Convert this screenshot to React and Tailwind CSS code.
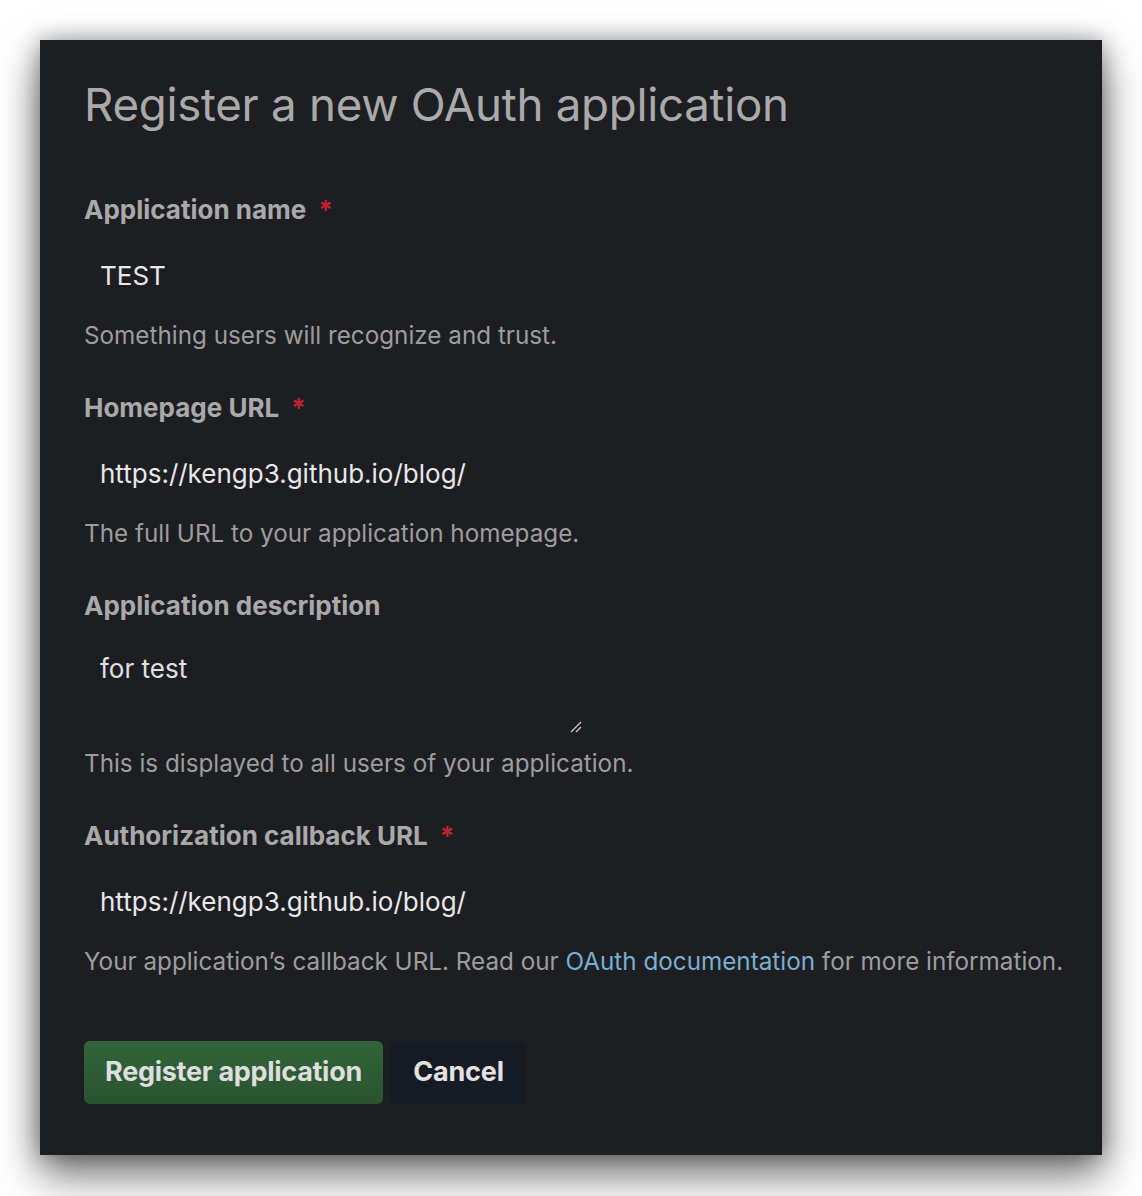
function Field({ label, required, children, hint, className = '' }) {
  return (
    <div className={className}>
      <div className="h-[34px] flex items-center text-[26px] font-bold text-[#a9a9a9]">
        {label}
        {required && <span className="ml-3 text-[#c5222f]">*</span>}
      </div>
      {children}
      <p className="h-[30px] flex items-center whitespace-nowrap text-[24.25px] text-[#9d9d9d]">{hint}</p>
    </div>
  )
}

function Input({ value }) {
  return (
    <div className="mt-[23px] mb-[20px] h-[52px] w-[500px] flex items-center px-4 text-[26px] text-[#e8e8e8]">
      {value}
    </div>
  )
}

export default function App() {
  return (
    <div className="bg-white p-10 pb-[41px] font-['Inter',sans-serif]">
      <div className="bg-[#1d1e22] px-[44px] pt-[77px] pb-[51px] shadow-[0_20px_40px_rgba(0,0,0,0.55),0_0_22px_rgba(0,0,0,0.35)]">
        <h1 className="-mt-10 h-[56px] flex items-center text-[45.7px] leading-none text-[#aaaaaa] tracking-[-0.3px]">
          Register a new OAuth application
        </h1>

        <Field className="mt-[59px]" label="Application name" required hint="Something users will recognize and trust.">
          <Input value="TEST" />
        </Field>

        <Field className="mt-[39px]" label="Homepage URL" required hint="The full URL to your application homepage.">
          <Input value="https://kengp3.github.io/blog/" />
        </Field>

        <Field className="mt-[39px]" label="Application description" hint="This is displayed to all users of your application.">
          <div className="relative mt-[23px] mb-[12px] h-[92px] w-[501px] px-4 pt-[7px] text-[26px] text-[#e0e0e0] leading-[34px]">
            for test
            <svg className="absolute right-[2px] bottom-[3px]" width="14" height="14" viewBox="0 0 14 14">
              <path d="M2 12 L12 2 M7 12 L12 7" stroke="#c8c8c8" strokeWidth="1.3" fill="none" />
            </svg>
          </div>
        </Field>

        <Field
          className="mt-[39px]"
          label="Authorization callback URL"
          required
          hint={
            <span>
              Your application’s callback URL. Read our <span className="text-[#7aafd0]">OAuth documentation</span> for more information.
            </span>
          }
        >
          <Input value="https://kengp3.github.io/blog/" />
        </Field>

        <div className="mt-[64px] flex gap-[7px]">
          <button className="h-[63px] w-[299px] rounded-[6px] bg-gradient-to-b from-[#316538] to-[#2a5330] text-[27px] font-bold text-[#dedede] tracking-[-0.3px]">
            Register application
          </button>
          <button className="h-[63px] w-[137px] rounded-[6px] bg-[#161b23] text-[27px] font-bold text-[#e2e2e2] tracking-[-0.2px]">
            Cancel
          </button>
        </div>
      </div>
    </div>
  )
}
